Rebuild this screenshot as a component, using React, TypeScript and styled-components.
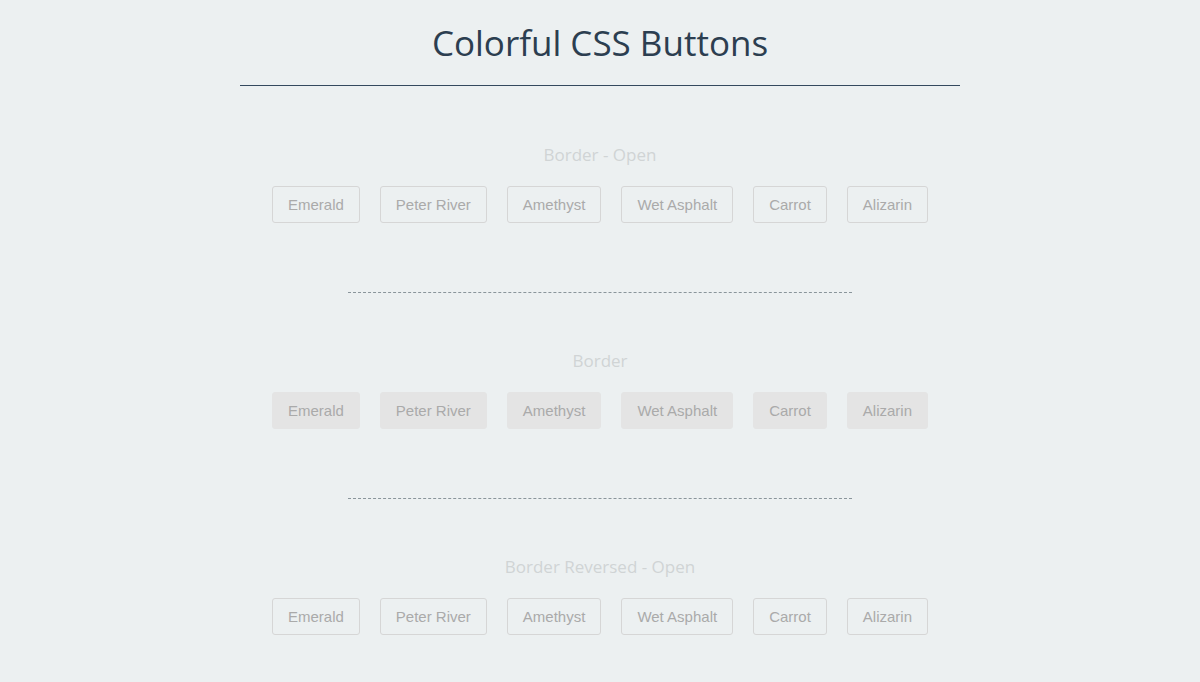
import React from "react";
import styled, { createGlobalStyle } from "styled-components";

const GlobalStyle = createGlobalStyle`
  body {
    margin: 0;
    background: #ecf0f1;
    font-family: "Open Sans", sans-serif;
  }
`;

const Wrapper = styled.div`
  width: 720px;
  margin: 0 auto;
`;

const Heading = styled.h1`
  margin: 0 0 57px;
  padding: 17px 0 16px;
  font-size: 35px;
  font-weight: 400;
  line-height: 52px;
  text-align: center;
  color: #2c3e50;
  border-bottom: 1px solid #34495e;
`;

const SectionTitle = styled.h2`
  margin: 0 0 19px;
  font-size: 17px;
  font-weight: 400;
  line-height: 24px;
  text-align: center;
  color: #d0d4d5;
`;

const Row = styled.div`
  display: flex;
  justify-content: center;
  gap: 20px;
`;

const Button = styled.button<{ $filled?: boolean }>`
  box-sizing: border-box;
  height: 37px;
  padding: 0 15px;
  font-family: "Liberation Sans", Arial, sans-serif;
  font-size: 15px;
  line-height: 35px;
  color: #aaaaaa;
  background: ${(p) => (p.$filled ? "#e4e4e4" : "transparent")};
  border: 1px solid ${(p) => (p.$filled ? "#e4e4e4" : "#d6d6d6")};
  border-radius: 3px;
  cursor: pointer;
`;

const Divider = styled.hr`
  width: 504px;
  margin: 69px auto 56px;
  border: 0;
  border-top: 1px dashed #8a959b;
`;

const colors = ["Emerald", "Peter River", "Amethyst", "Wet Asphalt", "Carrot", "Alizarin"];

const sections = [
  { title: "Border - Open", filled: false },
  { title: "Border", filled: true },
  { title: "Border Reversed - Open", filled: false },
];

const App = () => {
  return (
    <>
      <GlobalStyle />
      <Wrapper>
        <Heading>Colorful CSS Buttons</Heading>
        {sections.map((s, i) => (
          <section key={s.title}>
            <SectionTitle>{s.title}</SectionTitle>
            <Row>
              {colors.map((c) => (
                <Button key={c} $filled={s.filled}>
                  {c}
                </Button>
              ))}
            </Row>
            {i < sections.length - 1 && <Divider />}
          </section>
        ))}
      </Wrapper>
    </>
  );
};

export default App;
